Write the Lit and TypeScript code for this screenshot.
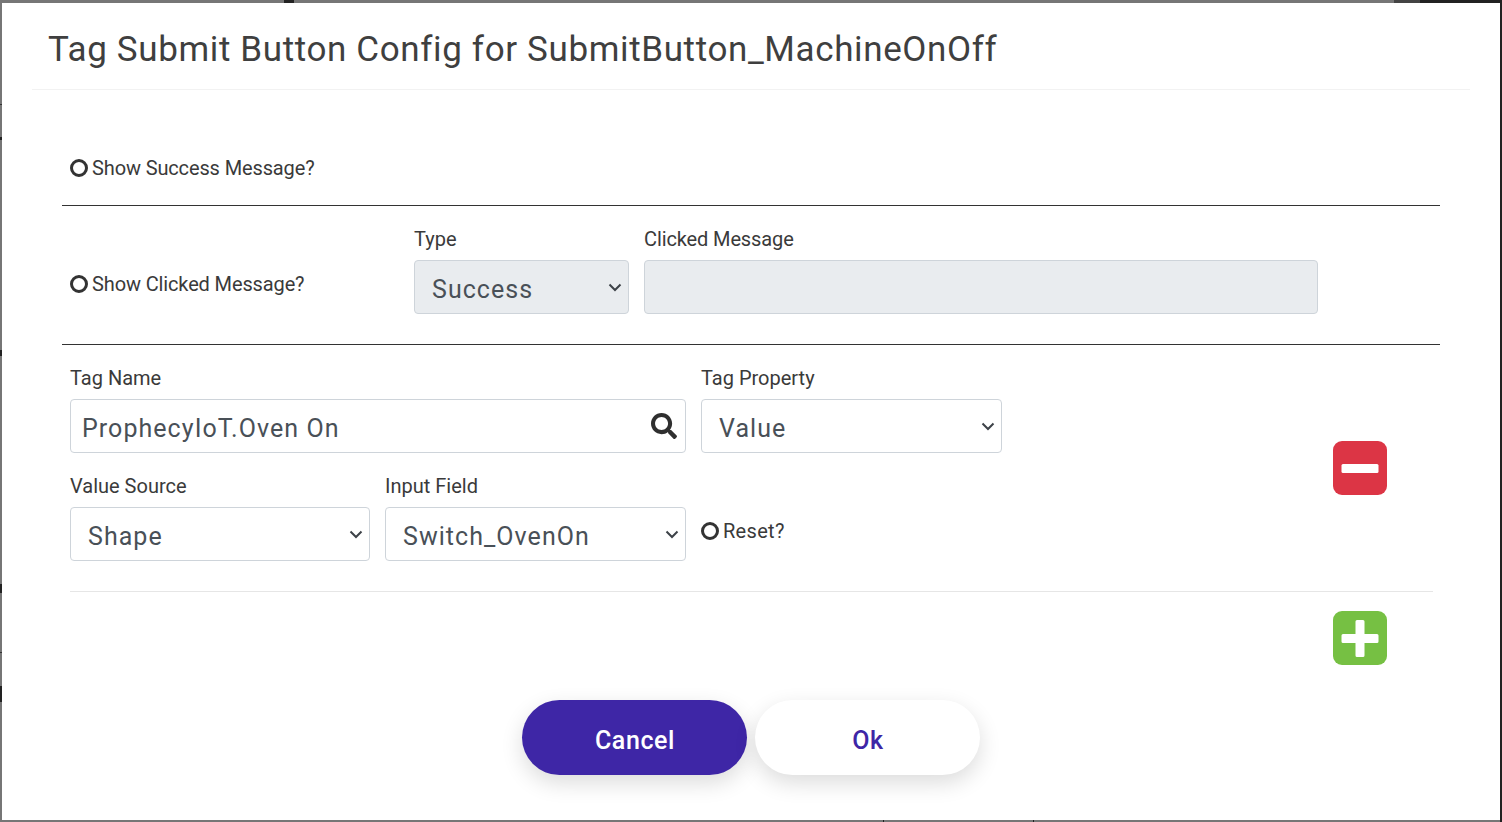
import { LitElement, html, css } from "lit";
import { customElement } from "lit/decorators.js";

const SEARCH = "M505 442.7L405.3 343c-4.5-4.5-10.6-7-17-7H372c27.6-35.3 44-79.7 44-128C416 93.1 322.9 0 208 0S0 93.1 0 208s93.1 208 208 208c48.3 0 92.7-16.4 128-44v16.3c0 6.4 2.5 12.5 7 17l99.7 99.7c9.4 9.4 24.6 9.4 33.9 0l28.3-28.3c9.4-9.4 9.4-24.6.1-34zM208 336c-70.7 0-128-57.2-128-128 0-70.7 57.2-128 128-128 70.7 0 128 57.2 128 128 0 70.7-57.2 128-128 128z";
const MINUS = "M10 23h34a1.5 1.5 0 0 1 1.5 1.5v6a1.5 1.5 0 0 1-1.5 1.5H10a1.5 1.5 0 0 1-1.5-1.5v-6A1.5 1.5 0 0 1 10 23z";
const PLUS = "M24 9h6a1.5 1.5 0 0 1 1.5 1.5V23H44a1.5 1.5 0 0 1 1.5 1.5v6A1.5 1.5 0 0 1 44 32H31.5v12.5A1.5 1.5 0 0 1 30 46h-6a1.5 1.5 0 0 1-1.5-1.5V32H10a1.5 1.5 0 0 1-1.5-1.5v-6A1.5 1.5 0 0 1 10 23h12.5V10.5A1.5 1.5 0 0 1 24 9z";

@customElement("app-root")
export class AppRoot extends LitElement {
  static styles = css`
    :host { display: block; width: 1502px; height: 822px; overflow: hidden;
      font-family: "Roboto", "Liberation Sans", sans-serif; color: #3a3a3a;
      background:
        linear-gradient(#222, #222) 284px 0 / 10px 3px no-repeat,
        linear-gradient(#444, #444) 1394px 0 / 26px 3px no-repeat,
        linear-gradient(#222, #222) 1420px 0 / 82px 3px no-repeat,
        linear-gradient(#222, #222) 1500px 0 / 2px 822px no-repeat,
        linear-gradient(#222, #222) 0 137px / 2px 3px no-repeat,
        linear-gradient(#333, #333) 0 104px / 2px 1px no-repeat,
        linear-gradient(#222, #222) 0 350px / 2px 6px no-repeat,
        linear-gradient(#222, #222) 0 584px / 2px 9px no-repeat,
        linear-gradient(#333, #333) 0 652px / 2px 1px no-repeat,
        linear-gradient(#222, #222) 0 686px / 2px 16px no-repeat,
        linear-gradient(#222, #222) 883px 820px / 1px 2px no-repeat,
        linear-gradient(#222, #222) 1033px 820px / 1px 2px no-repeat,
        #767676; }
    * { box-sizing: border-box; }
    .modal { margin: 3px 2px 0; height: 817px; background: #fff; display: flex; flex-direction: column; }
    .head { margin: 0 30px; height: 87px; padding: 26px 0 0 16px; border-bottom: 1px solid #f2f2f2; flex: none; }
    .head h1 { margin: 0; font-size: 35px; line-height: 42px; font-weight: 400; letter-spacing: 0.63px; white-space: nowrap; color: #3f3f3f; }
    .sec { margin: 0 60px; border-bottom: 1px solid #333; flex: none; }
    .s1 { height: 116px; padding: 65px 0 0 8px; }
    .s2 { height: 139px; display: flex; padding-left: 8px; }
    .radio { display: flex; align-items: center; gap: 4px; font-size: 20px; line-height: 26px; letter-spacing: -0.13px; white-space: nowrap; }
    .radio i { width: 18px; height: 18px; border: 3px solid #333; border-radius: 50%; flex: none; }
    .s2 .radio { width: 344px; margin-top: 65px; align-self: flex-start; }
    .field { display: flex; flex-direction: column; }
    label { font-size: 20px; line-height: 26px; letter-spacing: 0; height: 34px; }
    .msg label { letter-spacing: -0.12px; }
    .s2 .field { margin-top: 20px; }
    .type { width: 215px; margin-right: 15px; }
    .msg { width: 674px; }
    select, .input { height: 54px; width: 100%; border: 1px solid #ced4da; border-radius: 4px; background: #fff; color: #495057;
      font-family: inherit; font-size: 25px; letter-spacing: 1.05px; margin: 0; }
    select { appearance: none; -webkit-appearance: none; padding: 4px 30px 0 17px; display: block; }
    select:disabled, .input.off { background: #e9ecef; opacity: 1; color: #495057; }
    .sel, .wrap { position: relative; }
    .sel svg { position: absolute; right: 7px; top: 23px; width: 14px; height: 9px; fill: none; stroke: #3d4248; stroke-width: 2; pointer-events: none; }
    .s3 { margin: 0 60px; display: flex; flex: none; height: 246px; padding: 20px 53px 0 8px; justify-content: space-between; }
    .grid { display: grid; grid-template-columns: 300px 301px 301px; column-gap: 15px; row-gap: 20px; align-content: start; width: 932px; }
    .span2 { grid-column: span 2; }
    .wrap .input { display: flex; align-items: center; padding: 4px 50px 0 11px; }
    .wrap svg { position: absolute; right: 9px; top: 14px; width: 26px; height: 26px; fill: #2f2f2f; }
    .reset { margin-top: 45px; align-self: start; letter-spacing: 0.3px; }
    .ico { display: block; width: 54px; height: 54px; }
    .minus { margin-top: 76px; }
    .minus .bg { fill: #dc3545; }
    .plus .bg { fill: #76c043; }
    .ico .fg { fill: #fff; }
    .light { margin: 0 67px 0 68px; height: 1px; background: #e6e6e6; flex: none; }
    .add { display: flex; justify-content: flex-end; margin: 19px 113px 4px 0; flex: none; }
    .btns { display: flex; justify-content: center; gap: 8px; margin-top: 31px; flex: none; padding-right: 1px; }
    button { width: 225px; height: 75px; border: 0; border-radius: 38px; font-family: inherit; font-size: 25px; font-weight: 500; letter-spacing: 0.6px;
      box-shadow: 0 8px 22px rgba(0,0,0,.14); padding: 5px 0 0 2px; }
    .cancel { background: #3e26a6; color: #fff; }
    .ok { background: #fff; color: #3e26a6; }
  `;

  private icon(d: string, cls: string) {
    return html`<svg class="ico ${cls}" viewBox="0 0 54 54" aria-hidden="true"><rect class="bg" width="54" height="54" rx="9"></rect><path class="fg" d=${d}></path></svg>`;
  }

  private select(value: string, disabled = false) {
    return html`<div class="sel"><select ?disabled=${disabled}><option>${value}</option></select>
      <svg viewBox="0 0 14 9" aria-hidden="true"><path d="M1.5 1.5 7 7l5.5-5.5"></path></svg></div>`;
  }

  render() {
    return html`
      <div class="modal">
        <div class="head"><h1>Tag Submit Button Config for SubmitButton_MachineOnOff</h1></div>
        <div class="sec s1"><div class="radio"><i></i>Show Success Message?</div></div>
        <div class="sec s2">
          <div class="radio"><i></i>Show Clicked Message?</div>
          <div class="field type"><label>Type</label>${this.select("Success", true)}</div>
          <div class="field msg"><label>Clicked Message</label><div class="input off"></div></div>
        </div>
        <div class="s3">
          <div class="grid">
            <div class="field span2"><label>Tag Name</label>
              <div class="wrap"><div class="input">ProphecyIoT.Oven On</div>
                <svg viewBox="0 0 512 512" aria-hidden="true"><path d=${SEARCH}></path></svg></div></div>
            <div class="field"><label>Tag Property</label>${this.select("Value")}</div>
            <div class="field"><label>Value Source</label>${this.select("Shape")}</div>
            <div class="field"><label>Input Field</label>${this.select("Switch_OvenOn")}</div>
            <div class="radio reset"><i></i>Reset?</div>
          </div>
          ${this.icon(MINUS, "minus")}
        </div>
        <div class="light"></div>
        <div class="add">${this.icon(PLUS, "plus")}</div>
        <div class="btns"><button class="cancel">Cancel</button><button class="ok">Ok</button></div>
      </div>
    `;
  }
}
